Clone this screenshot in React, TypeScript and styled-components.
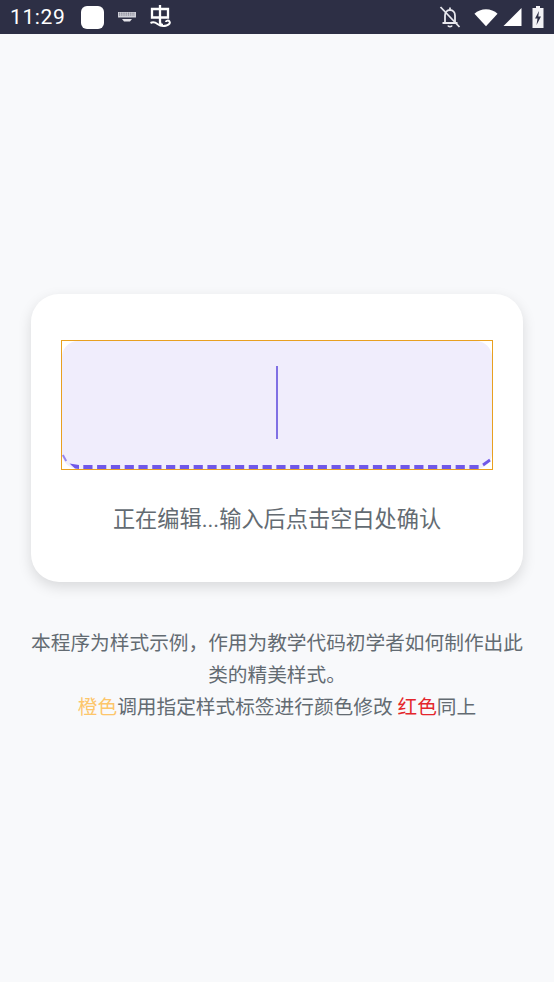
import React from 'react';
import styled, { createGlobalStyle } from 'styled-components';

const GlobalStyle = createGlobalStyle`
  html, body {
    margin: 0;
    padding: 0;
    background: #f8f9fb;
  }
  body {
    font-family: Roboto, "Noto Sans CJK SC", sans-serif;
  }
`;

const App = () => {
  return (
    <>
      <GlobalStyle />
      <Page>
        <StatusBar>
          <StatusLeft>
            <Time>11:29</Time>
            <AppSquare />
            <KeyboardIcon width="20" height="12" viewBox="0 0 20 12">
              <path d="M1 1h18v5.500H1z" fill="#cfd0d8" />
              <path d="M2 2.200h16M2 4h16" stroke="#2d2f45" strokeWidth="0.6" strokeDasharray="1 0.8" />
              <path d="M5 8h10l-2 2.500H7z" fill="#e4e4ea" />
            </KeyboardIcon>
            <BugIcon width="22" height="24" viewBox="0 0 22 24" fill="none" stroke="#fff" strokeWidth="2.3">
              <path d="M2 4h16v8.500H2z" />
              <path d="M10 0v17c0 2 1 3 3 3" />
              <path d="M0.500 18c3-1.500 5-.5 7 1s6 2.500 9 1.500 4-2.500 3-4-3.500-1-3.500 .5" strokeWidth="2" />
            </BugIcon>
          </StatusLeft>
          <StatusRight>
            <svg width="22" height="24" viewBox="0 0 22 24" fill="none" stroke="#e8e8ee" strokeWidth="1.8">
              <path d="M6 17.500v-7c0-3 2-5.500 5-5.500s5 2.500 5 5.500v7M3.500 18h15M9 20.500c.5 1.500 3.500 1.500 4 0M11 2.500v2" />
              <path d="M1.500 2l19 20" />
            </svg>
            <WifiIcon width="24" height="19" viewBox="0 0 26 20">
              <path d="M0.500 6C7 -0.700 19 -0.700 25.500 6L13 19.500z" fill="#fff" />
            </WifiIcon>
            <svg width="19" height="18" viewBox="0 0 18 18">
              <path d="M18 0v18H0z" fill="#fff" />
            </svg>
            <BatteryIcon width="12" height="22" viewBox="0 0 12 22">
              <path d="M4 0h4v2h3.500v20H.500V2H4z" fill="#f2f2f5" />
              <path d="M7 5L3 12.500h2.500L4.500 19 9 10.500H6.300z" fill="#2d2f45" />
            </BatteryIcon>
          </StatusRight>
        </StatusBar>
        <Main>
          <Card>
            <InputFrame>
              <InputFill>
                <Caret />
                <DashedEdge width="430" height="20" viewBox="0 0 430 20" fill="none" stroke="#7058e8">
                  <path d="M0.800 6l3.400 6" strokeWidth="2" strokeOpacity="0.7" />
                  <path d="M7.500 14.500l9.500 1.500v4l-4-.6z" fill="#7058e8" stroke="none" />
                  <path d="M21.300 18H417" strokeWidth="4" strokeDasharray="9.200 4.590" />
                  <path d="M421 16l7-5" strokeWidth="2.800" />
                </DashedEdge>
              </InputFill>
            </InputFrame>
            <Hint>正在编辑...输入后点击空白处确认</Hint>
          </Card>
          <Description>
            本程序为样式示例，作用为教学代码初学者如何制作出此类的精美样式。
            <br />
            <Highlight $color="#fdc66b">橙色</Highlight>调用指定样式标签进行颜色修改{' '}
            <Highlight $color="#e4262c">红色</Highlight>同上
          </Description>
        </Main>
      </Page>
    </>
  );
};

export default App;

const Page = styled.div`
  width: 554px;
  height: 982px;
  overflow: hidden;
  background: #f8f9fb;
`;

const StatusBar = styled.div`
  height: 34px;
  background: #2d2f45;
  display: flex;
  align-items: center;
  justify-content: space-between;
  padding: 0 10px 0 10px;
`;

const StatusLeft = styled.div`
  display: flex;
  align-items: center;
  gap: 13px;
`;

const StatusRight = styled.div`
  display: flex;
  align-items: center;
  gap: 9px;
`;

const Time = styled.span`
  font-family: Roboto, sans-serif;
  font-size: 21px;
  color: #fff;
  letter-spacing: 0.6px;
  margin-right: 3px;
`;

const AppSquare = styled.div`
  width: 23px;
  height: 23px;
  border-radius: 6px;
  background: #fff;
`;

const KeyboardIcon = styled.svg`
  display: block;
`;

const BugIcon = styled.svg`
  display: block;
`;

const WifiIcon = styled.svg`
  display: block;
  margin: 0 -4px 0 4px;
`;

const BatteryIcon = styled.svg`
  display: block;
  margin-left: 1px;
`;

const Main = styled.main`
  padding: 260px 31px 0;
`;

const Card = styled.section`
  height: 288px;
  box-sizing: border-box;
  padding: 46px 30px 0;
  background: #fff;
  border-radius: 28px;
  box-shadow: 0 5px 14px rgba(0, 0, 0, 0.13);
  display: flex;
  flex-direction: column;
  align-items: center;
`;

const InputFrame = styled.div`
  width: 432px;
  height: 130px;
  box-sizing: border-box;
  border: 1px solid #e8a020;
`;

const InputFill = styled.div`
  position: relative;
  height: 100%;
  box-sizing: border-box;
  background: #f0edfc;
  border-radius: 16px;
  display: flex;
  align-items: center;
  justify-content: center;
  padding-bottom: 6px;
`;

const DashedEdge = styled.svg`
  position: absolute;
  left: 0;
  bottom: 0;
  display: block;
`;

const Caret = styled.div`
  width: 2px;
  height: 73px;
  background: #8070e4;
`;

const Hint = styled.p`
  margin: 34px 0 0;
  font-size: 22.2px;
  line-height: 30px;
  color: #636b72;
  white-space: nowrap;
`;

const Description = styled.p`
  margin: 46px 0 0;
  font-size: 19.68px;
  line-height: 32px;
  color: #636b72;
  text-align: center;
`;

const Highlight = styled.span<{ $color: string }>`
  color: ${(p) => p.$color};
`;
